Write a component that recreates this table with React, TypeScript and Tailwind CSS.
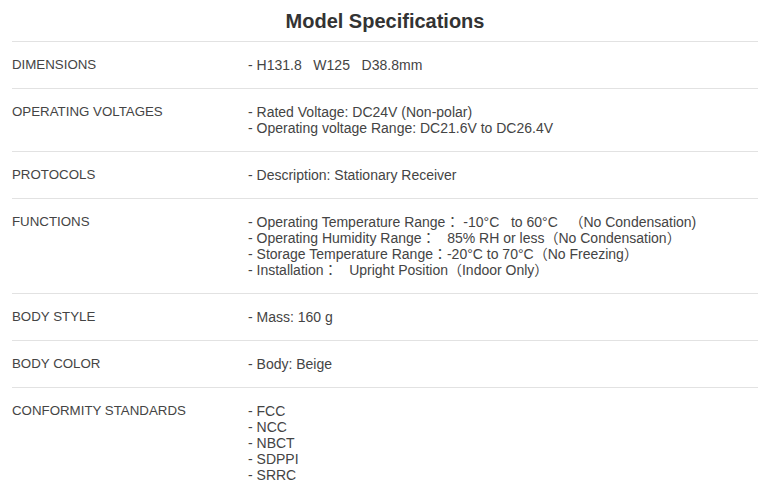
const rows: { label: string; values: string[] }[] = [
  { label: 'DIMENSIONS', values: ['- H131.8   W125   D38.8mm'] },
  {
    label: 'OPERATING VOLTAGES',
    values: ['- Rated Voltage: DC24V (Non-polar)', '- Operating voltage Range: DC21.6V to DC26.4V'],
  },
  { label: 'PROTOCOLS', values: ['- Description: Stationary Receiver'] },
  {
    label: 'FUNCTIONS',
    values: [
      '- Operating Temperature Range： -10°C   to 60°C   （No Condensation)',
      '- Operating Humidity Range：   85% RH or less（No Condensation）',
      '- Storage Temperature Range：-20°C to 70°C（No Freezing）',
      '- Installation：   Upright Position（Indoor Only）',
    ],
  },
  { label: 'BODY STYLE', values: ['- Mass: 160 g'] },
  { label: 'BODY COLOR', values: ['- Body: Beige'] },
  { label: 'CONFORMITY STANDARDS', values: ['- FCC', '- NCC', '- NBCT', '- SDPPI', '- SRRC'] },
];

export default function App() {
  return (
    <div
      className="min-h-[498px] bg-white pl-[12px] pr-[10px] text-[#444]"
      style={{ fontFamily: '"Liberation Sans", Arial, "Noto Sans CJK JP", sans-serif' }}
    >
      {/* Title */}
      <div className="flex h-[42px] items-center justify-center border-b border-[#e2e2e2] pt-[1px]">
        <h1 className="text-[20px] font-bold text-[#333]">Model Specifications</h1>
      </div>

      {/* Spec rows */}
      {rows.map((row) => (
        <div key={row.label} className="flex border-b border-[#e2e2e2] py-[15px] leading-[16px]">
          <div className="w-[236px] shrink-0 text-[13.3px]">{row.label}</div>
          <div className="flex flex-col text-[14px]">
            {row.values.map((v) => (
              <span key={v} className="whitespace-pre">
                {v}
              </span>
            ))}
          </div>
        </div>
      ))}
    </div>
  );
}
